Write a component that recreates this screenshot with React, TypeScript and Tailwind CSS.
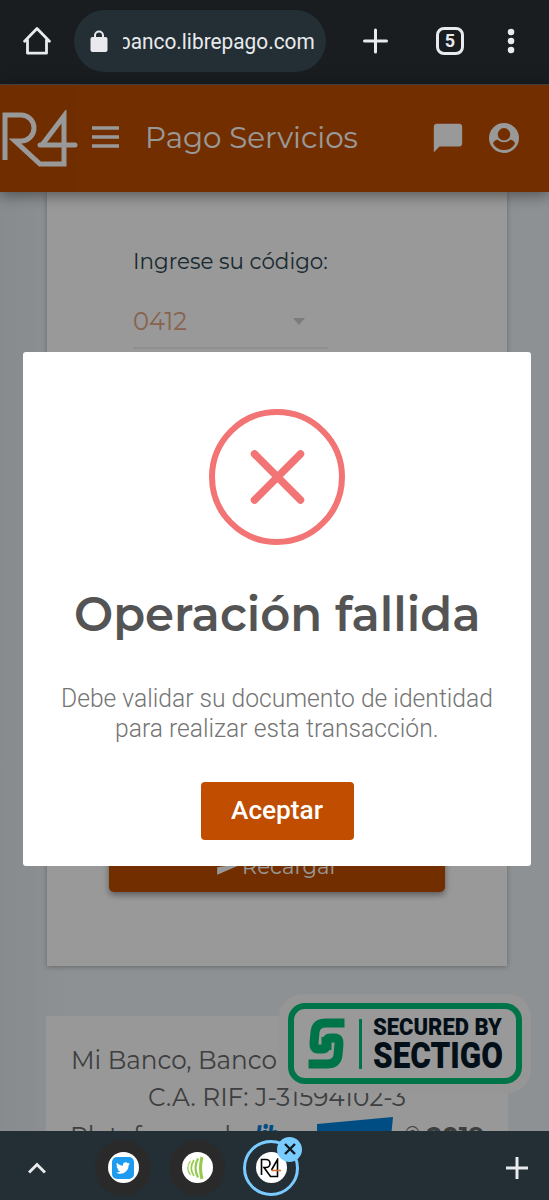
import { useLayoutEffect, useRef, useState, type ReactNode } from "react";
import { MdChatBubble, MdSend } from "react-icons/md";
import { FaTwitter } from "react-icons/fa";

/* Stretches a single line of text to the width of its box. */
function FitText({ className, children }: { className: string; children: ReactNode }) {
  const box = useRef<HTMLSpanElement>(null);
  const text = useRef<HTMLSpanElement>(null);
  const [scale, setScale] = useState(1);
  useLayoutEffect(() => {
    if (box.current && text.current) {
      setScale(box.current.clientWidth / text.current.offsetWidth);
    }
  }, []);
  return (
    <span ref={box} className={`block shrink-0 whitespace-nowrap ${className}`}>
      <span ref={text} className="inline-block origin-left" style={{ transform: `scaleX(${scale})` }}>
        {children}
      </span>
    </span>
  );
}

function R4Logo({ className, accent }: { className: string; accent?: string }) {
  return (
    <svg viewBox="0 0 78 58" className={className} fill="none" stroke="currentColor" strokeWidth="5">
      <path d="M5 50V5H21A13 13 0 0 1 21 31H15L40 54H64V6L42 35" />
      <path d="M40 35H75" stroke={accent ?? "currentColor"} strokeLinecap="round" />
    </svg>
  );
}

function BrowserBar() {
  return (
    <div className="flex h-[84px] shrink-0 items-center bg-[#1a1d1f] text-[#e8eaed]">
      <svg viewBox="0 0 28 28" className="ml-[23px] mt-[-2px] size-7" fill="none" stroke="currentColor" strokeWidth="2.8" strokeLinejoin="round" strokeLinecap="round">
        <path d="M4.5 13V26.2H23.5V13M1.6 14.2L14 1.6L26.4 14.2" />
      </svg>
      <div className="ml-[23px] mt-[-3px] flex h-[62px] w-[252px] items-center rounded-full bg-[#232f34]">
        <svg viewBox="0 0 18 22" className="ml-[16px] h-[22px] w-[18px]" fill="currentColor">
          <rect x="0.5" y="7" width="17" height="15" rx="2" />
          <path d="M5 8V5.500a4 4 0 0 1 8 0V8" fill="none" stroke="currentColor" strokeWidth="2" />
        </svg>
        <div className="ml-[15px] mt-[3px] w-[192px] overflow-hidden">
          <FitText className="-ml-[4px] w-[196px] font-['Roboto'] text-[22px] leading-7">banco.librepago.com</FitText>
        </div>
      </div>
      <svg viewBox="0 0 26 26" className="ml-[37px] mt-[-2px] size-[26px]" stroke="currentColor" strokeWidth="3" strokeLinecap="round">
        <path d="M12.500 2V24M1.500 13H23.500" />
      </svg>
      <div className="ml-[47px] mt-[-2px] flex size-7 items-center justify-center rounded-[8px] border-[3px] border-[#e8eaed] font-['Roboto'] text-[18px] font-bold leading-none">5</div>
      <svg viewBox="0 0 8 26" className="ml-[43px] mt-[-2px] h-[26px] w-2" fill="currentColor">
        <circle cx="4" cy="4" r="3.3" />
        <circle cx="4" cy="13" r="3.3" />
        <circle cx="4" cy="22" r="3.3" />
      </svg>
    </div>
  );
}

function AppHeader() {
  return (
    <header className="relative z-10 flex h-[108px] shrink-0 items-center border-t border-[#6b6b6b] bg-[#c04d00] pb-[4px] text-white shadow-[0_3px_14px_rgba(0,0,0,0.45)]">
      <div className="-mb-[4px] flex h-[107px] w-[78px] items-center bg-[#bb4b01]">
        <R4Logo className="h-[58px] w-[78px]" />
      </div>
      <svg viewBox="0 0 27 24" className="ml-[14px] h-6 w-[27px]" stroke="currentColor" strokeWidth="3.5">
        <path d="M0 3H27M0 12H27M0 21H27" />
      </svg>
      <FitText className="ml-[26px] w-[213px] text-[29.500px] leading-9">Pago Servicios</FitText>
      <MdChatBubble className="ml-[73px] mt-[2px] size-[34px]" />
      <svg viewBox="0 0 30 30" className="ml-[24px] mt-[2px] size-[30px]">
        <circle cx="15" cy="15" r="15" fill="currentColor" />
        <circle cx="15" cy="11.300" r="6.200" fill="#c04d00" />
        <path d="M4 20.500Q5.500 16.500 9 16.800Q10.500 19.200 15 19.200T21 16.800Q24.500 16.500 26 20.500A12.500 12.500 0 0 1 4 20.500Z" fill="#c04d00" />
      </svg>
    </header>
  );
}

function SectigoSeal() {
  return (
    <div className="absolute left-[279px] top-[802px] rounded-[24px] bg-[#fbfbfb] p-[9px]">
      <div className="flex h-[81px] w-[234px] items-center rounded-[17px] border-[6px] border-[#00c27a] bg-white">
        <svg viewBox="0 0 37 51" className="ml-[14px] h-[51px] w-[37px]" fill="none" stroke="#00c27a" strokeWidth="9">
          <path d="M36.500 5H18Q8 5 7 14L6 25Q5.500 31 10 31H15Q18 31 18 28V19" />
          <path d="M0.500 46H19Q29 46 30 37L31 26Q31.500 20 27 20H22Q19 20 19 23V32" />
        </svg>
        <div className="ml-[14px] h-[50px] w-[3px] bg-[#00c27a]" />
        <div className="ml-[11px] flex flex-col font-['Roboto'] font-black text-[#061a29]">
          <FitText className="w-[129px] text-[23px] leading-[23px]">SECURED BY</FitText>
          <FitText className="w-[130px] text-[37px] leading-[33px]">SECTIGO</FitText>
        </div>
      </div>
    </div>
  );
}

function Page() {
  return (
    <main className="relative flex grow flex-col items-center overflow-hidden bg-[linear-gradient(90deg,#e2e8eb,#edf2f6_12%,#edf2f6)] pl-[5px]">
      <section className="flex h-[774px] w-[460px] shrink-0 flex-col bg-white pt-[55px] shadow-[0_1px_5px_rgba(0,0,0,0.28)]">
        <div className="ml-[86px] w-[195px]">
          <FitText className="w-[195px] text-[22px] leading-[30px] text-[#2c4550]">Ingrese su código:</FitText>
          <div className="mt-[23px] flex h-[49px] items-start justify-between border-b-2 border-[#efefef] pr-[23px]">
            <FitText className="w-[54px] text-[26px] leading-[43px] text-[#e5a584]">0412</FitText>
            <svg viewBox="0 0 12 7" className="mt-[18px] h-[7px] w-3" fill="#cfcfcf">
              <path d="M0 0H12L6 7Z" />
            </svg>
          </div>
        </div>
        <button className="ml-[62px] mt-[489px] flex h-[54px] w-[336px] items-center rounded-[5px] bg-[#c04d00] pl-[106px] pt-[2px] text-white shadow-[0_3px_6px_rgba(0,0,0,0.4)]">
          <MdSend className="mb-[2px] size-[26px]" />
          <FitText className="ml-[1px] w-[96px] text-[22px]">Recargar</FitText>
        </button>
      </section>
      <footer className="mt-[50px] flex w-[462px] shrink-0 flex-col bg-[#fdfdfd] pt-[25px] text-[25.500px] leading-[37px] text-[#66696c]">
        <FitText className="ml-[25px] w-[206px]">Mi Banco, Banco</FitText>
        <FitText className="ml-[102px] w-[258px]">C.A. RIF: J-31594102-3</FitText>
        <div className="flex pt-[2px]">
          <FitText className="ml-[24px] w-[176px]">Plataforma de</FitText>
          <FitText className="ml-[9px] w-[25px] text-[25px] font-extrabold italic text-[#0080dd]">lib</FitText>
          <svg viewBox="0 0 78 40" className="ml-[36px] h-10 w-[78px]" fill="#0080dd">
            <path d="M1 7L77 0L73 40H1Z" />
          </svg>
          <FitText className="ml-[10px] w-[17px]">©</FitText>
          <FitText className="ml-[6px] w-[58px] font-bold">2019</FitText>
        </div>
      </footer>
      <SectigoSeal />
    </main>
  );
}

function FailureDialog() {
  return (
    <div className="absolute inset-x-0 bottom-0 top-[84px] z-20 bg-black/40 pl-[23px] pt-[268px]">
      <div role="dialog" className="flex h-[514px] w-[508px] flex-col items-center rounded-[3px] bg-white pt-[57px]">
        <svg viewBox="0 0 136 136" className="size-[136px] shrink-0" fill="none" stroke="#f27474">
          <circle cx="68" cy="68" r="65" strokeWidth="6" />
          <path d="M45.500 45L91.500 91M91.500 45L45.500 91" strokeWidth="7.500" strokeLinecap="round" />
        </svg>
        <h2 className="mt-[40px] text-[#545454]">
          <FitText className="w-[406px] text-[47px] font-semibold leading-[60px]">Operación fallida</FitText>
        </h2>
        <p className="mt-[39px] flex flex-col items-center font-['Roboto'] text-[25.500px] font-light leading-[29.500px] text-[#747474]">
          <FitText className="w-[432px]">Debe validar su documento de identidad</FitText>
          <FitText className="w-[324px]">para realizar esta transacción.</FitText>
        </p>
        <button className="mt-[39px] flex h-[58px] w-[153px] shrink-0 items-center justify-center rounded-[4px] bg-[#c04d00] pb-[3px] text-white">
          <FitText className="w-[92px] font-['Roboto'] text-[26.500px] font-medium">Aceptar</FitText>
        </button>
      </div>
    </div>
  );
}

function TabStrip() {
  return (
    <nav className="relative z-30 flex h-[69px] shrink-0 items-center bg-[#232f34] pt-[4px] text-[#e8eaed]">
      <svg viewBox="0 0 18 12" className="ml-[28px] h-3 w-[18px]" fill="none" stroke="currentColor" strokeWidth="3">
        <path d="M1 10.500L9 2.500L17 10.500" />
      </svg>
      <div className="ml-[49px] flex size-[56px] items-center justify-center rounded-full bg-[#2b2a2b]">
        <div className="flex size-[31px] items-center justify-center rounded-full bg-white">
          <div className="flex size-[22px] items-center justify-center rounded-[5px] bg-[#1d9bf0]">
            <FaTwitter className="size-[14px] text-white" />
          </div>
        </div>
      </div>
      <div className="ml-[18px] flex size-[56px] items-center justify-center rounded-full bg-[#2b2a2b]">
        <div className="flex size-[31px] items-center justify-center rounded-full bg-white pr-[5px]">
          <svg viewBox="0 0 18 24" className="h-6 w-[18px]" fill="none" stroke="#92ca4b">
            <path d="M4.500 5Q-1 12 4.500 19" strokeWidth="1.200" />
            <path d="M8 4Q2.500 12 8 20" strokeWidth="1.700" />
            <path d="M12 2.500Q7 12 12 21.500" strokeWidth="2.200" />
            <path d="M16 1Q13 12 16 23" strokeWidth="3" />
          </svg>
        </div>
      </div>
      <div className="relative ml-[18px] flex size-[56px] items-center justify-center rounded-full border-[3px] border-[#7acbff]">
        <div className="flex size-[31px] items-center justify-center rounded-full bg-white text-black">
          <svg viewBox="0 0 22 20" className="h-5 w-[22px]" fill="none" stroke="currentColor" strokeWidth="1.600">
            <path d="M1.500 17V1.500H6A3.800 3.800 0 0 1 6 9.500H4L10.500 18.500H17.500V1.500L11.500 12" />
            <path d="M11.500 12.500H21" stroke="#d8732c" />
          </svg>
        </div>
        <div className="absolute -right-[6px] -top-[6px] flex size-[25px] items-center justify-center rounded-full bg-[#7acbff]">
          <svg viewBox="0 0 12 12" className="size-3" stroke="#14191c" strokeWidth="2.400">
            <path d="M1 1L11 11M11 1L1 11" />
          </svg>
        </div>
      </div>
      <svg viewBox="0 0 22 22" className="ml-[207px] size-[22px]" stroke="currentColor" strokeWidth="3">
        <path d="M11 0V22M0 11H22" />
      </svg>
    </nav>
  );
}

export default function App() {
  return (
    <div className="relative flex h-[1200px] w-[549px] flex-col overflow-hidden font-['Montserrat','Inter',sans-serif]">
      <BrowserBar />
      <AppHeader />
      <Page />
      <FailureDialog />
      <TabStrip />
    </div>
  );
}
